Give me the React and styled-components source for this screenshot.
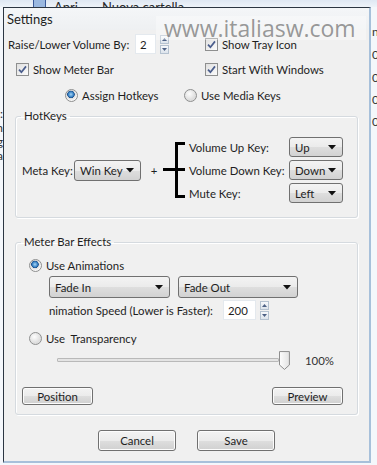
import React from "react";
import styled, { createGlobalStyle } from "styled-components";

const Global = createGlobalStyle`
  body {
    margin: 0;
    background: #eef2f7;
    font-family: Lato, "Open Sans", sans-serif;
    font-size: 11.4px;
    color: #1e1e1e;
  }
`;

function CheckIcon() {
  return (
    <svg width="9" height="9" viewBox="0 0 9 9">
      <path d="M1 4.6 L3.4 7.2 L8 1.4" fill="none" stroke="#4a5d8c" strokeWidth="1.7" />
    </svg>
  );
}

function Caret() {
  return (
    <svg width="8" height="5" viewBox="0 0 8 5">
      <path d="M0 0 H8 L4 4.5 Z" fill="#111" />
    </svg>
  );
}

function SpinArrows() {
  return (
    <Spin>
      <SpinBtn>
        <svg width="5" height="3" viewBox="0 0 5 3">
          <path d="M0 3 L2.5 0 L5 3 Z" fill="#4d6185" />
        </svg>
      </SpinBtn>
      <SpinBtn>
        <svg width="5" height="3" viewBox="0 0 5 3">
          <path d="M0 0 L2.5 3 L5 0 Z" fill="#4d6185" />
        </svg>
      </SpinBtn>
    </Spin>
  );
}

function Bracket() {
  return (
    <svg width="22" height="56" viewBox="0 0 22 56">
      <path
        d="M0 27.5 H13 M13.5 1.5 V54.5 M12 1.5 H22 M12 27.5 H22 M12 54.5 H22"
        stroke="#000"
        strokeWidth="3"
        fill="none"
      />
    </svg>
  );
}

function Thumb() {
  return (
    <svg width="11" height="19" viewBox="0 0 11 19">
      <defs>
        <linearGradient id="tg" x1="0" x2="1">
          <stop offset="0" stopColor="#fdfdfd" />
          <stop offset="1" stopColor="#e2e2e2" />
        </linearGradient>
      </defs>
      <path d="M0.5 0.5 H10.5 V14 L5.5 18.5 L0.5 14 Z" fill="url(#tg)" stroke="#8c8c8c" />
    </svg>
  );
}

function Check({ label, checked }) {
  return (
    <CheckRow>
      <Box>{checked && <CheckIcon />}</Box>
      <span>{label}</span>
    </CheckRow>
  );
}

function Radio({ label, checked }) {
  return (
    <CheckRow>
      <Round $checked={checked} />
      <span>{label}</span>
    </CheckRow>
  );
}

function Select({ value, width, height = 20 }) {
  return (
    <Combo style={{ width, height }}>
      <span>{value}</span>
      <Caret />
    </Combo>
  );
}

export default function App() {
  return (
    <Page>
      <Global />
      <TopStrip>
        <StripIcon />
        <StripText $w={48}>Apri</StripText>
        <StripText>Nuova cartella</StripText>
      </TopStrip>
      <Middle>
        <LeftEdge>
          <EdgeText>:</EdgeText>
          <EdgeText>n</EdgeText>
          <EdgeText>g</EdgeText>
          <EdgeText>a</EdgeText>
        </LeftEdge>
        <Dialog>
          <Watermark>www.italiasw.com</Watermark>
          <TitleBar>Settings</TitleBar>
          <TopGrid>
            <Cell>
              <Label $w={127}>Raise/Lower Volume By:</Label>
              <SpinInput $w={21}>2</SpinInput>
              <SpinArrows />
            </Cell>
            <Cell>
              <Check label="Show Tray Icon" checked />
            </Cell>
            <Cell $indent={8}>
              <Check label="Show Meter Bar" checked />
            </Cell>
            <Cell>
              <Check label="Start With Windows" checked />
            </Cell>
          </TopGrid>
          <ModeRow>
            <ModeItem>
              <Radio label="Assign Hotkeys" checked />
            </ModeItem>
            <Radio label="Use Media Keys" />
          </ModeRow>

          <Group $top={4}>
            <Legend>HotKeys</Legend>
            <HotkeyRow>
              <Label $w={52}>Meta Key:</Label>
              <Select value="Win Key" width={67} height={21} />
              <Plus>+</Plus>
              <Bracket />
              <KeyGrid>
                <Label>Volume Up Key:</Label>
                <Select value="Up" width={54} />
                <Label>Volume Down Key:</Label>
                <Select value="Down" width={54} />
                <Label>Mute Key:</Label>
                <Select value="Left" width={54} />
              </KeyGrid>
            </HotkeyRow>
          </Group>

          <Group $top={17}>
            <Legend>Meter Bar Effects</Legend>
            <EffectRow $top={8} $indent={8}>
              <Radio label="Use Animations" checked />
            </EffectRow>
            <EffectRow $top={3} $indent={28} $gap={8}>
              <Select value="Fade In" width={121} height={22} />
              <Select value="Fade Out" width={120} height={22} />
            </EffectRow>
            <EffectRow $top={2} $indent={28}>
              <Label $w={174}>nimation Speed (Lower is Faster):</Label>
              <SpinInput $w={33}>200</SpinInput>
              <SpinArrows />
            </EffectRow>
            <EffectRow $top={10} $indent={8}>
              <Radio label="Use  Transparency" />
            </EffectRow>
            <EffectRow $top={4} $indent={36}>
              <Track>
                <Rail />
                <Thumb />
              </Track>
              <Percent>100%</Percent>
            </EffectRow>
            <ButtonRow>
              <Button $w={71}>Position</Button>
              <Button $w={71}>Preview</Button>
            </ButtonRow>
          </Group>

          <Footer>
            <Button $w={78} $h={21}>Cancel</Button>
            <Button $w={78} $h={21}>Save</Button>
          </Footer>
        </Dialog>
        <RightEdge>
          <EdgeText $top={18}>n</EdgeText>
          <EdgeText $top={9}>07</EdgeText>
          <EdgeText $top={9}>07</EdgeText>
          <EdgeText $top={8}>07</EdgeText>
          <EdgeText $top={8}>07</EdgeText>
        </RightEdge>
      </Middle>
    </Page>
  );
}

const Page = styled.div`
  width: 377px;
  height: 465px;
  overflow: hidden;
  background: #f4f7fb;
`;

const TopStrip = styled.div`
  height: 7px;
  overflow: hidden;
  display: flex;
  align-items: flex-end;
  padding-left: 33px;
  background: linear-gradient(#dfe8f3, #eef3f9);
`;

const StripIcon = styled.div`
  width: 11px;
  height: 11px;
  margin-bottom: -3px;
  border: 1px solid #3a5a9a;
  background: #9ab8e0;
  margin-right: 8px;
`;

const StripText = styled.span`
  width: ${(p) => (p.$w ? `${p.$w}px` : "auto")};
  line-height: 14px;
  margin-bottom: -7px;
  font-size: 13px;
  color: #2a2a2a;
`;

const Middle = styled.div`
  display: flex;
`;

const LeftEdge = styled.div`
  width: 3px;
  overflow: hidden;
  display: flex;
  flex-direction: column;
  padding-top: 100px;
  direction: rtl;
`;

const RightEdge = styled.div`
  flex: 1;
  overflow: hidden;
  display: flex;
  flex-direction: column;
  padding-left: 1px;
`;

const EdgeText = styled.span`
  margin-top: ${(p) => p.$top || 0}px;
  line-height: 14px;
  font-size: 12px;
  color: #333;
`;

const Dialog = styled.div`
  position: relative;
  width: 365px;
  height: 453px;
  border-left: 1px solid #2c3642;
  border-top: 1px solid #2c3642;
  border-right: 2px solid #a7c0da;
  border-bottom: 2px solid #a7c0da;
  background: #f0f0f0;
  display: flex;
  flex-direction: column;
`;

const Watermark = styled.div`
  position: absolute;
  left: 152px;
  top: 8px;
  width: 210px;
  height: 24px;
  padding-left: 8px;
  box-sizing: border-box;
  font-family: "Open Sans", sans-serif;
  font-size: 23px;
  line-height: 24px;
  color: rgba(110, 110, 110, 0.7);
  background: rgba(255, 255, 255, 0.35);
  pointer-events: none;
`;

const TitleBar = styled.div`
  height: 22px;
  line-height: 22px;
  padding-left: 3px;
  font-size: 13px;
  background: linear-gradient(#f4f6f8, #eef0f2);
`;

const TopGrid = styled.div`
  display: grid;
  grid-template-columns: 197px 1fr;
  grid-auto-rows: 20px;
  row-gap: 5px;
  margin-top: 4px;
  padding-left: 4px;
`;

const Cell = styled.div`
  display: flex;
  align-items: center;
  padding-left: ${(p) => p.$indent || 0}px;
`;

const Label = styled.span`
  width: ${(p) => (p.$w ? `${p.$w}px` : "auto")};
  flex-shrink: 0;
  white-space: nowrap;
`;

const SpinInput = styled.div`
  width: ${(p) => p.$w}px;
  height: 20px;
  box-sizing: border-box;
  line-height: 20px;
  padding-left: 4px;
  background: #fff;
  border: 1px solid #e4e9ee;
`;

const Spin = styled.div`
  display: flex;
  flex-direction: column;
  gap: 1px;
  margin-left: 4px;
`;

const SpinBtn = styled.div`
  width: 9px;
  height: 9px;
  box-sizing: border-box;
  border: 1px solid #b5c2d0;
  background: linear-gradient(#f6f8fb, #dde4ec);
  display: flex;
  align-items: center;
  justify-content: center;
`;

const CheckRow = styled.label`
  display: flex;
  align-items: center;
  gap: 4px;
  white-space: pre;
`;

const Box = styled.span`
  width: 13px;
  height: 13px;
  box-sizing: border-box;
  border: 1px solid #8e8f8f;
  background: linear-gradient(135deg, #e0e0e0, #fbfbfb);
  display: flex;
  align-items: center;
  justify-content: center;
`;

const Round = styled.span`
  width: 13px;
  height: 13px;
  box-sizing: border-box;
  border-radius: 50%;
  border: 1px solid #8e8f8f;
  background: ${(p) =>
    p.$checked
      ? "radial-gradient(circle at 45% 40%, #a9d6f5 0, #3c86c8 2.5px, #1c4f8a 3.5px, #dcdcdc 4px, #f8f8f8 6px)"
      : "radial-gradient(circle at 40% 35%, #fdfdfd 0, #dedede 6px)"};
`;

const ModeRow = styled.div`
  display: flex;
  height: 20px;
  align-items: center;
  margin-top: 6px;
  padding-left: 61px;
`;

const ModeItem = styled.div`
  width: 119px;
`;

const Group = styled.fieldset`
  margin: ${(p) => p.$top}px 0 0 11px;
  width: 343px;
  box-sizing: border-box;
  padding: 0 0 0 5px;
  border: 1px solid #d5dadf;
  border-radius: 3px;
  box-shadow: inset 1px 1px 0 #fff, 1px 1px 0 #fff;
`;

const Legend = styled.legend`
  padding: 0 3px;
  line-height: 14px;
`;

const HotkeyRow = styled.div`
  display: flex;
  align-items: center;
  margin: 14px 0 14px 1px;
`;

const Plus = styled.span`
  width: 22px;
  text-align: center;
  padding-left: 4px;
  box-sizing: border-box;
`;

const KeyGrid = styled.div`
  display: grid;
  grid-template-columns: 100px 54px;
  grid-auto-rows: 20px;
  row-gap: 3px;
  align-items: center;
  margin-left: 4px;
`;

const Combo = styled.div`
  box-sizing: border-box;
  display: flex;
  align-items: center;
  justify-content: space-between;
  padding: 0 6px 0 5px;
  border: 1px solid #707070;
  border-radius: 3px;
  background: linear-gradient(#f3f3f3 0%, #ebebeb 50%, #dedede 51%, #d2d2d2 100%);
`;

const EffectRow = styled.div`
  display: flex;
  align-items: center;
  gap: ${(p) => p.$gap || 0}px;
  margin-top: ${(p) => p.$top}px;
  padding-left: ${(p) => p.$indent}px;
  min-height: 16px;
`;

const Track = styled.div`
  width: 233px;
  height: 20px;
  display: flex;
  align-items: center;
`;

const Rail = styled.div`
  width: 222px;
  height: 2px;
  border: 1px solid #b9b9b9;
  border-radius: 1px;
  background: #e4e4e4;
`;

const Percent = styled.span`
  margin-left: 15px;
  color: #333;
`;

const ButtonRow = styled.div`
  display: flex;
  justify-content: space-between;
  margin: 17px 14px 9px 1px;
`;

const Button = styled.button`
  width: ${(p) => p.$w}px;
  height: ${(p) => p.$h || 18}px;
  padding: 0;
  font: inherit;
  color: #1e1e1e;
  border: 1px solid #707070;
  border-radius: 3px;
  background: linear-gradient(#f3f3f3 0%, #ebebeb 50%, #dedede 51%, #d0d0d0 100%);
  box-shadow: inset 0 0 0 1px #fcfcfc;
`;

const Footer = styled.div`
  display: flex;
  justify-content: center;
  gap: 21px;
  margin-top: 15px;
`;
